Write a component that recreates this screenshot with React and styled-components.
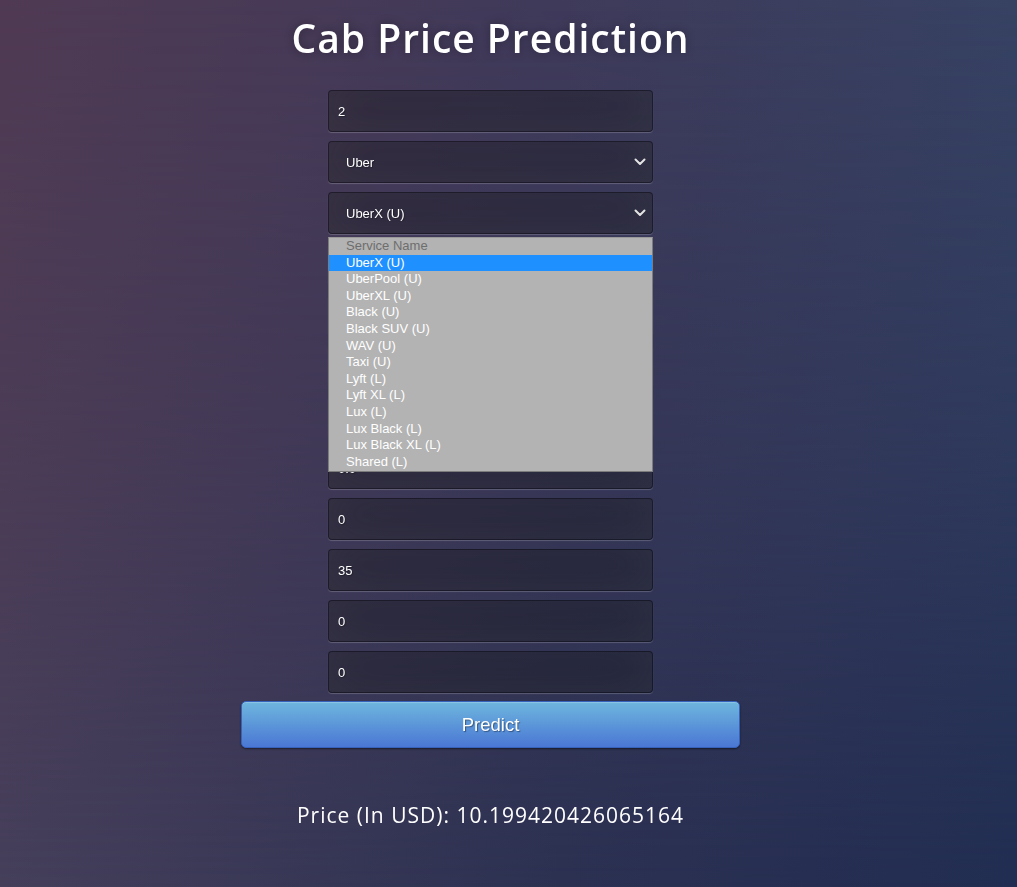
import React from 'react';
import styled, { createGlobalStyle } from 'styled-components';

const GlobalStyle = createGlobalStyle`
  html, body {
    margin: 0;
    padding: 0;
    height: 100%;
  }
  body {
    font-family: 'Open Sans', 'Liberation Sans', Arial, sans-serif;
    background: linear-gradient(to right, #453f5b 0%, #2c3152 55%, #212d52 100%);
    overflow: hidden;
  }
  body::before {
    content: '';
    position: fixed;
    inset: 0;
    z-index: -1;
    background: linear-gradient(to right, #503a53 0%, #3f3a5a 55%, #374263 100%);
    -webkit-mask-image: linear-gradient(to bottom, #000 0%, rgba(0, 0, 0, 0.6) 50%, transparent 100%);
    mask-image: linear-gradient(to bottom, #000 0%, rgba(0, 0, 0, 0.6) 50%, transparent 100%);
  }
`;

const Page = styled.div`
  min-height: 887px;
  box-sizing: border-box;
  display: flex;
  flex-direction: column;
  align-items: center;
  padding-right: 36px;
`;

const Title = styled.h1`
  margin: 12px 0 26px;
  color: #fff;
  font-family: 'Open Sans', sans-serif;
  font-weight: 600;
  font-size: 39px;
  letter-spacing: 1px;
  text-shadow: 0 0 10px rgba(0, 0, 0, 0.3);
  line-height: 52px;
`;

const Form = styled.form`
  width: 499px;
  display: flex;
  flex-direction: column;
  align-items: center;
`;

const Fields = styled.div`
  width: 325px;
  display: flex;
  flex-direction: column;
  gap: 9px;
  position: relative;
`;

const fieldStyle = `
  width: 100%;
  height: 42px;
  box-sizing: border-box;
  margin: 0;
  background: rgba(0, 0, 0, 0.3);
  border: 1px solid rgba(0, 0, 0, 0.3);
  border-radius: 4px;
  outline: none;
  color: #fff;
  font-family: 'Liberation Sans', Arial, sans-serif;
  font-size: 13px;
  text-shadow: 1px 1px 1px rgba(0, 0, 0, 0.3);
  box-shadow: inset 0 -5px 45px rgba(100, 100, 100, 0.2), 0 1px 1px rgba(255, 255, 255, 0.2);
`;

const Input = styled.input`
  ${fieldStyle}
  padding: 0 9px;
`;

const SelectWrap = styled.div`
  position: relative;
`;

const Select = styled.select`
  ${fieldStyle}
  appearance: none;
  -webkit-appearance: none;
  padding: 0 17px;
`;

const Chevron = styled.svg`
  position: absolute;
  right: 7px;
  top: 17px;
  pointer-events: none;
`;

const Listbox = styled.ul`
  position: absolute;
  top: 45px;
  left: 0;
  right: 0;
  z-index: 5;
  margin: 0;
  padding: 0 0 1px;
  list-style: none;
  background: #b3b3b3;
  border: 1px solid #7c7c7c;
  border-top-color: #9a9a9a;
  box-sizing: border-box;
  font-family: 'Liberation Sans', Arial, sans-serif;
  font-size: 13px;
`;

const Option = styled.li`
  height: 16.6px;
  line-height: 16.6px;
  padding-left: 17px;
  color: ${p => (p.$disabled ? '#6e6e6e' : '#fff')};
  background: ${p => (p.$active ? '#1e90ff' : 'transparent')};
  white-space: nowrap;
`;

const Button = styled.button`
  width: 100%;
  height: 47px;
  margin-top: 8px;
  border: 1px solid #3762bc;
  border-radius: 5px;
  background-color: #4a77d4;
  background-image: linear-gradient(to bottom, #6eb6de, #4a77d4);
  box-shadow: inset 0 1px 0 rgba(255, 255, 255, 0.2), 0 1px 2px rgba(0, 0, 0, 0.5);
  color: #fff;
  font-family: 'Liberation Sans', Arial, sans-serif;
  font-size: 18.5px;
  text-shadow: 1px 1px 1px rgba(0, 0, 0, 0.4);
  cursor: pointer;
`;

const Result = styled.p`
  margin: 53px 0 0;
  color: #fff;
  font-family: 'Open Sans', sans-serif;
  font-size: 21px;
  letter-spacing: 1px;
  line-height: 28px;
  text-align: center;
`;

const services = [
  'UberX (U)',
  'UberPool (U)',
  'UberXL (U)',
  'Black (U)',
  'Black SUV (U)',
  'WAV (U)',
  'Taxi (U)',
  'Lyft (L)',
  'Lyft XL (L)',
  'Lux (L)',
  'Lux Black (L)',
  'Lux Black XL (L)',
  'Shared (L)',
];

const ArrowDown = () => (
  <Chevron width="12" height="8" viewBox="0 0 12 8">
    <path d="M1.5 1.5 L6 6 L10.5 1.5" fill="none" stroke="#e4e4e4" strokeWidth="2" strokeLinecap="round" strokeLinejoin="round" />
  </Chevron>
);

const App = () => {
  const numbers = ['0.5', '1.0', '0.0', '1', '0.0', '0', '35', '0', '0'];

  return (
    <>
      <GlobalStyle />
      <Page>
        <Title>Cab Price Prediction</Title>
        <Form onSubmit={e => e.preventDefault()}>
          <Fields>
            <Input defaultValue="2" />
            <SelectWrap>
              <Select defaultValue="Uber">
                <option>Uber</option>
                <option>Lyft</option>
              </Select>
              <ArrowDown />
            </SelectWrap>
            <SelectWrap>
              <Select defaultValue="UberX (U)">
                {services.map(s => (
                  <option key={s}>{s}</option>
                ))}
              </Select>
              <ArrowDown />
              <Listbox>
                <Option $disabled>Service Name</Option>
                {services.map((s, i) => (
                  <Option key={s} $active={i === 0}>
                    {s}
                  </Option>
                ))}
              </Listbox>
            </SelectWrap>
            {numbers.map((n, i) => (
              <Input key={i} defaultValue={n} />
            ))}
          </Fields>
          <Button type="submit">Predict</Button>
        </Form>
        <Result>Price (In USD): 10.199420426065164</Result>
      </Page>
    </>
  );
};

export default App;
